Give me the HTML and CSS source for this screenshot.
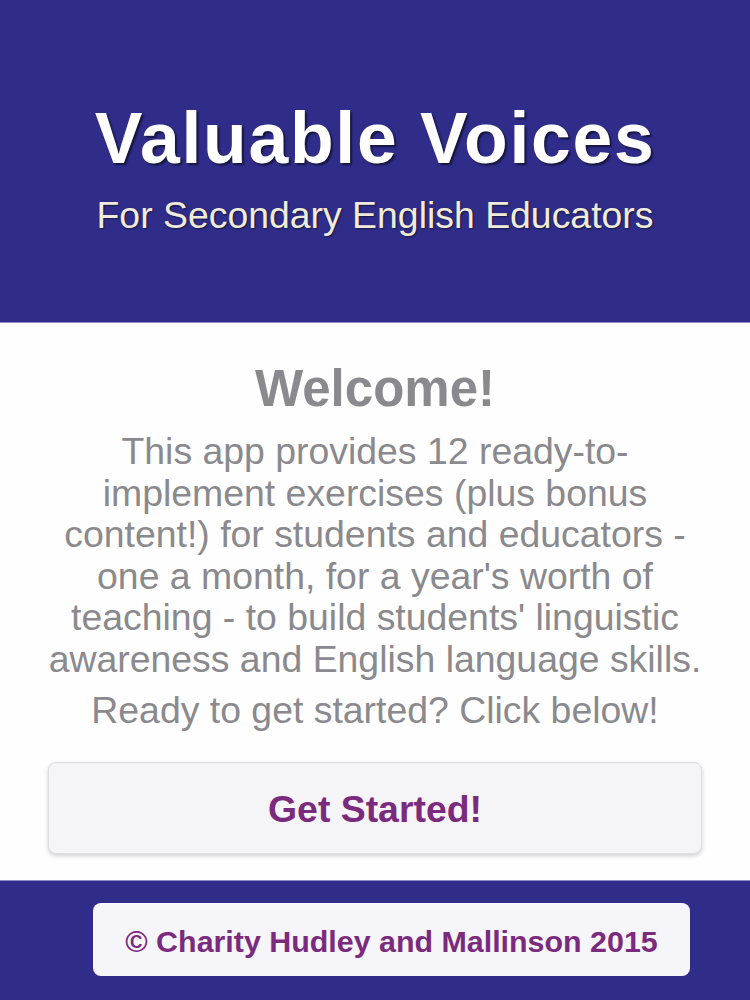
FILE: index.html
```html
<!DOCTYPE html>
<html>
<head>
<meta charset="utf-8">
<link rel="stylesheet" href="styles.css">
</head>
<body>
<header class="hero">
  <h1 class="title">Valuable Voices</h1>
  <p class="subtitle">For Secondary English Educators</p>
</header>
<main class="welcome">
  <h2 class="welcome-title">Welcome!</h2>
  <p class="intro">This app provides 12 ready-to-implement exercises (plus bonus content!) for students and educators - one a month, for a year's worth of teaching - to build students' linguistic awareness and English language skills.</p>
  <p class="ready">Ready to get started? Click below!</p>
  <button class="start-btn">Get Started!</button>
</main>
<footer class="footer">
  <div class="copyright">© Charity Hudley and Mallinson 2015</div>
</footer>
</body>
</html>
```
FILE: styles.css
```css
html, body {
  margin: 0;
  padding: 0;
}
body {
  width: 750px;
  height: 1000px;
  overflow: hidden;
  font-family: "Liberation Sans", Arial, Helvetica, sans-serif;
  background: #fefefe;
}
.hero {
  background: #2f2d89;
  height: 323px;
  box-sizing: border-box;
  padding-top: 98px;
  text-align: center;
  border-bottom: 1px solid #8f8ec4;
}
.title {
  margin: 0;
  font-size: 71.5px;
  line-height: 80px;
  font-weight: bold;
  color: #ffffff;
  letter-spacing: 1.7px;
  text-shadow: 2px 2px 2px rgba(0, 0, 0, 0.55);
}
.subtitle {
  margin: 17px 0 0;
  font-size: 37.4px;
  line-height: 41px;
  color: #f1ecd9;
  text-shadow: 1px 1px 2px rgba(0, 0, 0, 0.5);
}
.welcome {
  height: 557px;
  box-sizing: border-box;
  padding: 38px 44px 0;
  text-align: center;
  color: #8a898d;
}
.welcome-title {
  margin: 0;
  font-size: 51px;
  line-height: 56px;
  font-weight: bold;
}
.intro {
  margin: 14px 0 0;
  font-size: 37.4px;
  line-height: 41.5px;
}
.ready {
  margin: 10px 0 0;
  font-size: 37.4px;
  line-height: 41.5px;
}
.start-btn {
  display: block;
  margin: 30px 0 0 4px;
  width: 654px;
  height: 92px;
  border: 1px solid #dedde2;
  border-radius: 8px;
  background: #f5f4f7;
  box-shadow: 0 2px 4px rgba(0, 0, 0, 0.18);
  font-family: "Liberation Sans", Arial, Helvetica, sans-serif;
  font-size: 37.4px;
  font-weight: bold;
  color: #7a2b7e;
  padding: 3px 0 0;
}
.footer {
  background: #2f2d89;
  height: 120px;
  box-sizing: border-box;
  border-top: 1px solid #8f8ec4;
  padding: 22px 0 0 93px;
}
.copyright {
  width: 597px;
  height: 73px;
  box-sizing: border-box;
  border-radius: 8px;
  background: #f6f5f9;
  display: flex;
  align-items: center;
  justify-content: center;
  font-size: 30.4px;
  font-weight: bold;
  color: #7a2b7e;
  padding-top: 4px;
}
```
